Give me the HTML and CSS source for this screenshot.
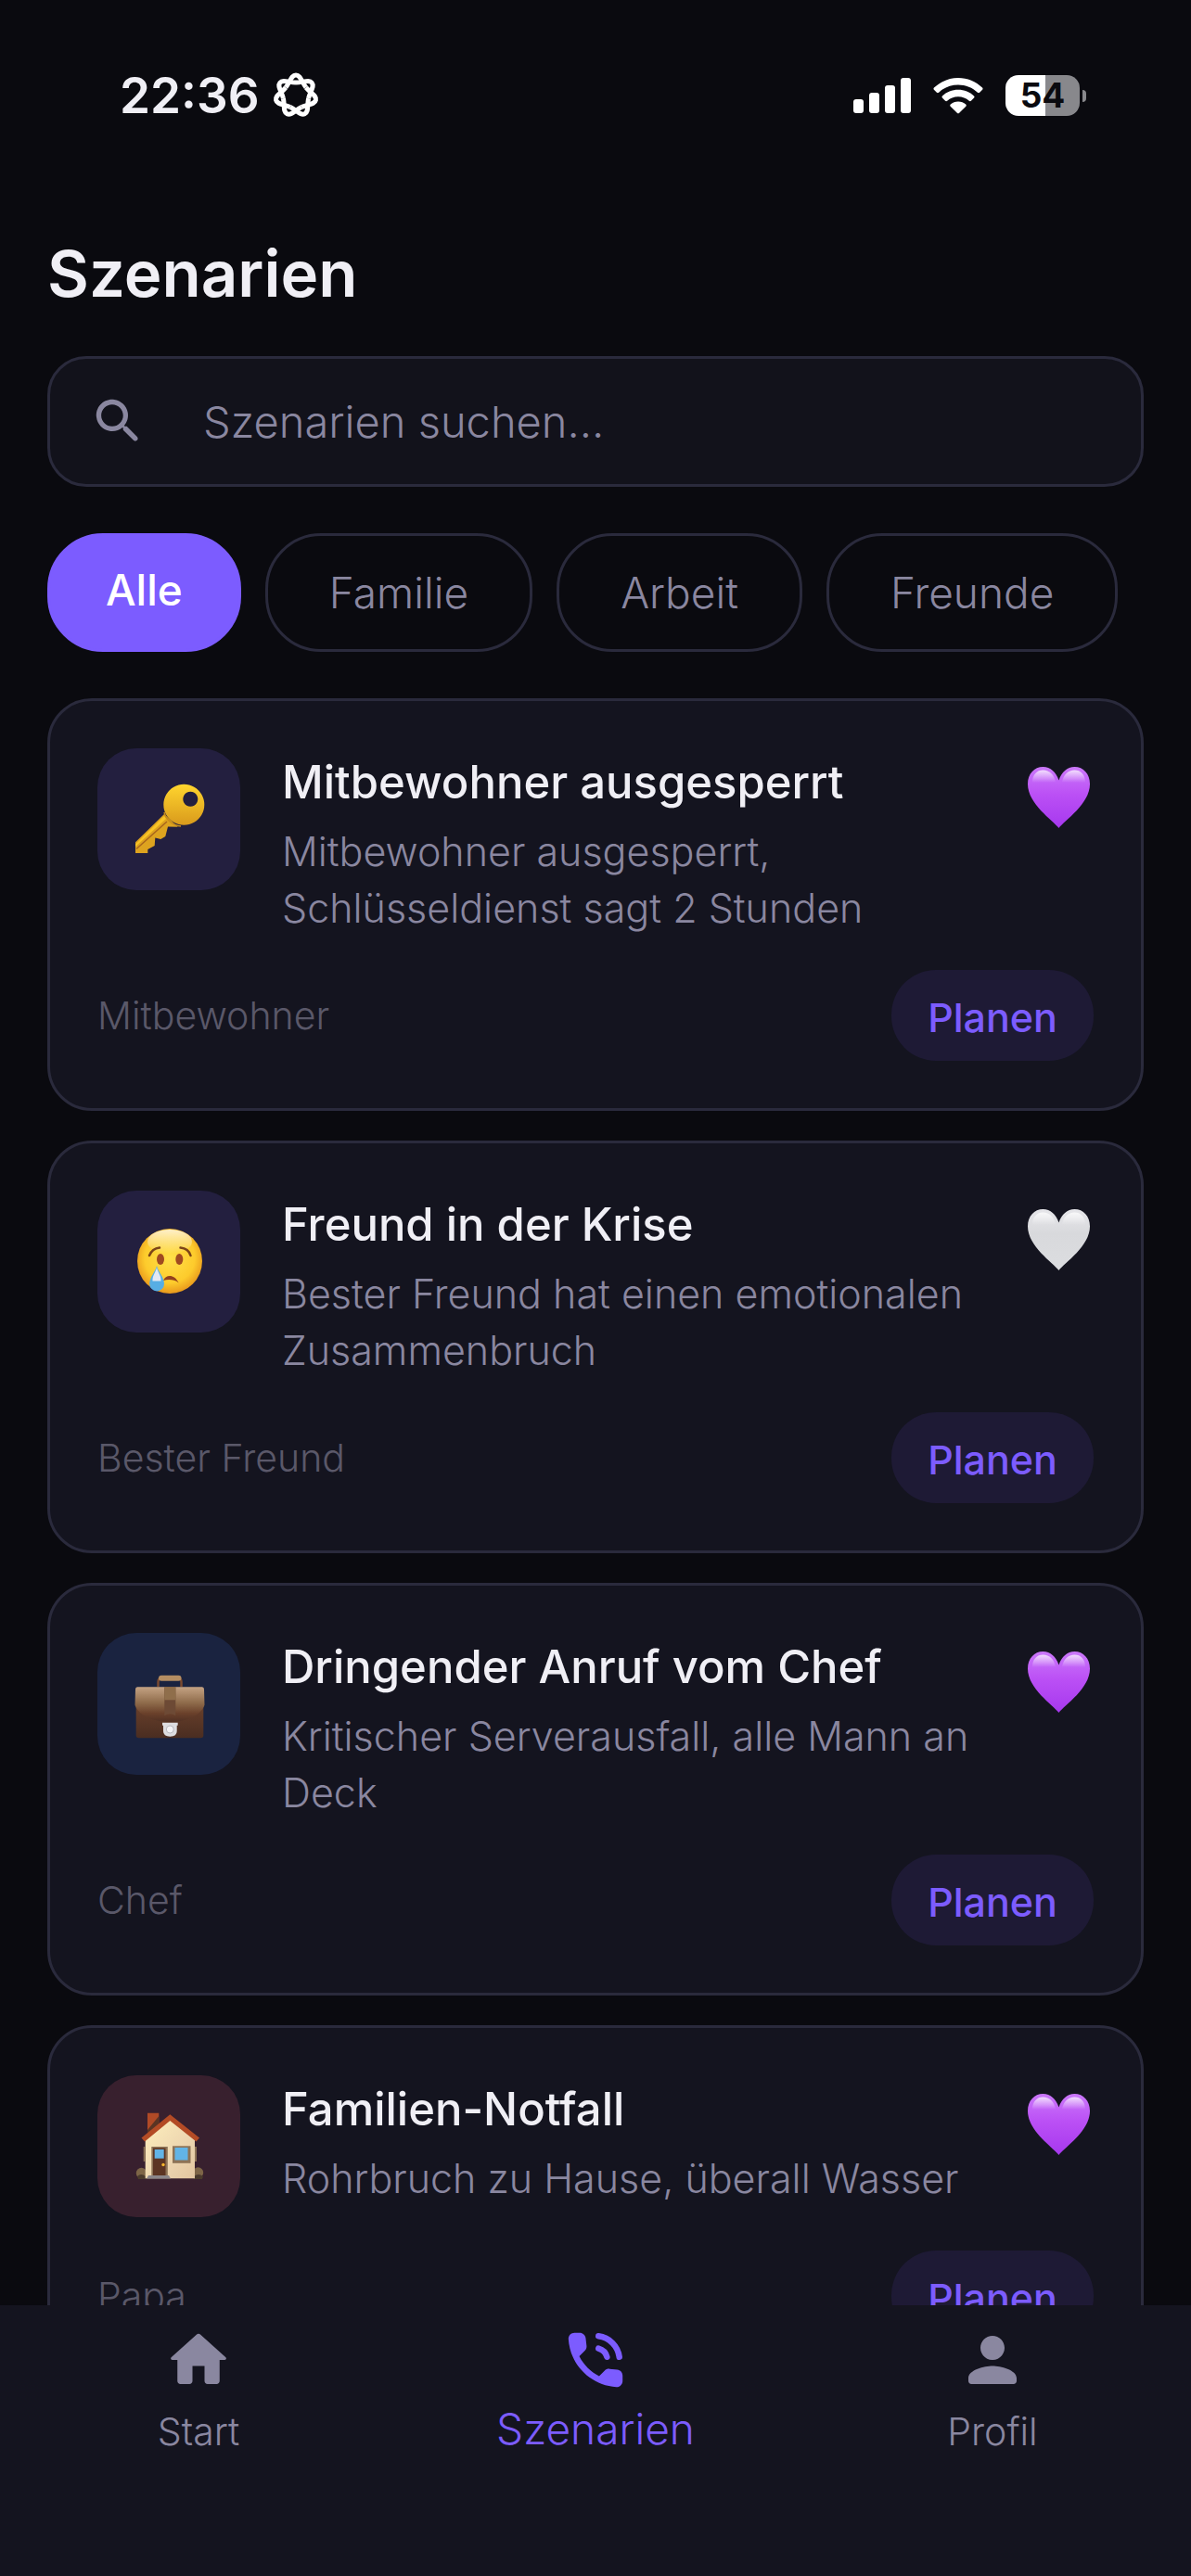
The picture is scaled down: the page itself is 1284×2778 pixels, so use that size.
FILE: index.html
```html
<!DOCTYPE html>
<html lang="de">
<head>
<meta charset="utf-8">
<meta name="viewport" content="width=device-width, initial-scale=1">
<title>Szenarien</title>
<link rel="stylesheet" href="styles.css">
</head>
<body>
<svg class="defs" width="0" height="0" aria-hidden="true">
  <defs>
    <linearGradient id="violet" x1="0" y1="0" x2="0" y2="1">
      <stop offset="0" stop-color="#cb78fa"/><stop offset=".45" stop-color="#bb50f5"/><stop offset="1" stop-color="#a638ee"/>
    </linearGradient>
    <linearGradient id="silver" x1="0" y1="0" x2="0" y2="1">
      <stop offset="0" stop-color="#e6e6ea"/><stop offset=".4" stop-color="#d8d9dc"/><stop offset="1" stop-color="#dcdde0"/>
    </linearGradient>
    <linearGradient id="shine" x1="0" y1="0" x2="0" y2="1">
      <stop offset="0" stop-color="#fff" stop-opacity=".75"/><stop offset="1" stop-color="#fff" stop-opacity="0"/>
    </linearGradient>
    <linearGradient id="gold" x1="0" y1="0" x2="0" y2="1">
      <stop offset="0" stop-color="#ffd52e"/><stop offset="1" stop-color="#d99a1c"/>
    </linearGradient>
    <radialGradient id="face" cx=".5" cy=".45" r=".55">
      <stop offset="0" stop-color="#ffe04a"/><stop offset=".7" stop-color="#fdcb2c"/><stop offset="1" stop-color="#e8981c"/>
    </radialGradient>
    <linearGradient id="flap" x1="0" y1="0" x2="0" y2="1">
      <stop offset="0" stop-color="#c4a283"/><stop offset=".45" stop-color="#8f6c4b"/><stop offset=".75" stop-color="#6b412b"/><stop offset="1" stop-color="#4f3023"/>
    </linearGradient>
    <linearGradient id="leather" x1="0" y1="0" x2="0" y2="1">
      <stop offset="0" stop-color="#7a4a30"/><stop offset="1" stop-color="#4a2d21"/>
    </linearGradient>
    <linearGradient id="wall" x1="0" y1="0" x2="1" y2="1">
      <stop offset="0" stop-color="#fff0bd"/><stop offset=".6" stop-color="#edd6b0"/><stop offset="1" stop-color="#e2c6a0"/>
    </linearGradient>
    <symbol id="heart" viewBox="0 0 67 66">
      <path d="M33.500 66C27 57.500 0 40 0 18.500C0 7.500 7 0 16.500 0c8 0 14 5.500 17 14.500C36.500 5.500 42.500 0 50.500 0C60 0 67 7.500 67 18.500C67 40 40 57.500 33.500 66z"/>
      <path d="M5 17C5 8 10 3.500 16.500 3.500c7 0 12 5 13.500 13zM37 16.500C38.500 8.500 43.500 3.500 50.500 3.500C57 3.500 62 8 62 17z" fill="url(#shine)"/>
    </symbol>
  </defs>
</svg>

<div class="app">
  <div class="status">
    <div class="status-group status-left">
      <span class="clock">22:36</span>
      <svg width="50" height="50" viewBox="-25 -25 50 50" fill="none" stroke="#fff" stroke-width="5" aria-hidden="true">
        <path id="petal" d="M-10.900-8.700C-6-15-5-22 0-22S6-15 10.900-8.700"/>
        <use href="#petal" transform="rotate(51.430)"/><use href="#petal" transform="rotate(102.860)"/>
        <use href="#petal" transform="rotate(154.290)"/><use href="#petal" transform="rotate(205.710)"/>
        <use href="#petal" transform="rotate(257.140)"/><use href="#petal" transform="rotate(308.570)"/>
      </svg>
    </div>
    <div class="status-group status-right">
      <svg width="62" height="40" viewBox="0 0 62 40" fill="#fff" aria-hidden="true">
        <rect x="0" y="24" width="11" height="15" rx="3"/><rect x="17" y="17" width="11" height="22" rx="3"/>
        <rect x="34" y="9" width="11" height="30" rx="3"/><rect x="51" y="1" width="11" height="38" rx="3"/>
      </svg>
      <svg width="54" height="40" viewBox="0 0 54 40" fill="#fff" aria-hidden="true">
        <path d="M27 1C37 1 46 5 53 11.500c.7.700.7 1.500.1 2.200l-3 3.100c-.6.600-1.500.6-2.200 0C42.500 11.500 35 8.500 27 8.500S11.500 11.500 6.100 16.800c-.7.600-1.600.6-2.200 0l-3-3.100c-.6-.7-.6-1.500.1-2.200C8 5 17 1 27 1z"/>
        <path d="M27 13.800c6.600 0 12.500 2.500 17 6.600.7.700.7 1.600.1 2.200l-3.200 3.200c-.6.600-1.400.6-2.100 0-3.200-2.800-7.300-4.500-11.800-4.500s-8.600 1.700-11.800 4.500c-.7.600-1.500.6-2.100 0l-3.200-3.200c-.6-.6-.6-1.500.1-2.200 4.500-4.100 10.400-6.600 17-6.600z"/>
        <path d="M27 26.500c3.200 0 6 1.100 8.200 3 .7.700.7 1.500.1 2.200l-7.100 7.100c-.7.700-1.700.7-2.400 0l-7.100-7.100c-.6-.7-.6-1.500.1-2.200 2.200-1.900 5-3 8.200-3z"/>
      </svg>
      <div class="battery"><span class="battery-level">54</span><i class="battery-nub"></i></div>
    </div>
  </div>

  <main class="content">
    <h1 class="title">Szenarien</h1>

    <label class="search">
      <svg class="search-icon" viewBox="0 0 24 24" fill="#8a87a0" aria-hidden="true"><path d="M15.500 14h-.79l-.28-.27c1.200-1.400 1.820-3.310 1.480-5.340-.47-2.780-2.790-5-5.590-5.340-4.230-.52-7.790 3.040-7.270 7.270.34 2.800 2.560 5.120 5.340 5.590 2.030.34 3.940-.28 5.340-1.480l.27.28v.79l4.250 4.250c.41.410 1.080.41 1.490 0 .41-.41.41-1.080 0-1.490L15.500 14zm-6 0C7.010 14 5 11.990 5 9.500S7.010 5 9.500 5 14 7.010 14 9.500 11.990 14 9.500 14z"/></svg>
      <input class="search-input" type="search" placeholder="Szenarien suchen..." aria-label="Szenarien suchen">
    </label>

    <div class="chips">
      <button class="chip chip-active" type="button">Alle</button>
      <button class="chip" type="button">Familie</button>
      <button class="chip" type="button">Arbeit</button>
      <button class="chip" type="button">Freunde</button>
    </div>

    <section class="list">
      <article class="card">
        <div class="card-top">
          <div class="tile">
            <svg class="emoji" viewBox="0 0 80 80" role="img" aria-label="Schlüssel">
              <path d="M35 34L4 64.300V76h13.300v-4l7.400-4 .6-8.500 6 1.500 5-3 2.700-10.500 10.700.2z" fill="#dda31f"/>
              <path d="M35 36L4 66.500v2.500L37 39z" fill="#f9c426"/><path d="M5 71.500L38 42" stroke="#a8651c" stroke-width="1.500"/>
              <path fill-rule="evenodd" d="M56.300 1.700a22 22 0 1 0 .01 0zM63.300 9.700a8 8 0 1 1-.01 0z" fill="url(#gold)"/>
              <path d="M35 32c2 8 9 14 18 15" fill="none" stroke="#c98d1b" stroke-width="1.500"/>
            </svg>
          </div>
          <div class="card-text">
            <h2 class="card-title">Mitbewohner ausgesperrt</h2>
            <p class="card-desc">Mitbewohner ausgesperrt, Schlüsseldienst sagt 2 Stunden</p>
          </div>
          <button class="fav" type="button" aria-label="Favorit entfernen" aria-pressed="true"><svg class="heart" fill="url(#violet)"><use href="#heart"/></svg></button>
        </div>
        <div class="card-bottom">
          <span class="caller">Mitbewohner</span>
          <button class="plan" type="button">Planen</button>
        </div>
      </article>

      <article class="card">
        <div class="card-top">
          <div class="tile">
            <svg class="emoji" viewBox="0 0 80 80" role="img" aria-label="Weinendes Gesicht">
              <circle cx="41" cy="39" r="35" fill="url(#face)"/>
              <ellipse cx="41" cy="18" rx="24" ry="13" fill="url(#shine)"/>
              <g fill="none" stroke="#7c4418" stroke-width="2.500" stroke-linecap="round">
                <path d="M19 33C21 28 25 25 30 24.500"/><path d="M52.500 24.500C58 25 62 28 63.500 33"/>
              </g>
              <ellipse cx="31" cy="37" rx="4" ry="6" fill="#a04a20"/><ellipse cx="51.300" cy="37" rx="4" ry="6" fill="#a04a20"/>
              <path d="M34 60C37 53 46 53 50.700 62.500C46 58.500 39 58.500 34 60z" fill="#93401d"/>
              <path d="M27 44C28 50 35 56 35 63.500a7.900 7.900 0 0 1-15.800 0C19.200 56 26 50 27 44z" fill="#57aee4"/>
              <path d="M27 46C28 51 32 55 31.500 60.500H22.500C22 55 26 51 27 46z" fill="#e3e8f2"/>
            </svg>
          </div>
          <div class="card-text">
            <h2 class="card-title">Freund in der Krise</h2>
            <p class="card-desc">Bester Freund hat einen emotionalen Zusammenbruch</p>
          </div>
          <button class="fav" type="button" aria-label="Als Favorit merken" aria-pressed="false"><svg class="heart" fill="url(#silver)"><use href="#heart"/></svg></button>
        </div>
        <div class="card-bottom">
          <span class="caller">Bester Freund</span>
          <button class="plan" type="button">Planen</button>
        </div>
      </article>

      <article class="card">
        <div class="card-top">
          <div class="tile tile-work">
            <svg class="emoji" viewBox="0 0 80 80" role="img" aria-label="Aktentasche">
              <path d="M28.500 21v-5c0-3 1.500-4.500 4-4.500h17c2.500 0 4 1.500 4 4.500v5" fill="none" stroke="#7a4a30" stroke-width="2.500"/>
              <rect x="29" y="8.700" width="24.500" height="6" rx="3" fill="#b48d62"/>
              <rect x="4.700" y="22" width="72.600" height="54.300" rx="3" fill="url(#leather)"/>
              <path d="M6 21.300h70q2 0 2 2.500l.5 17C75 52 58 59 41 59S7 52 3.500 40.800l.5-17q0-2.500 2-2.500z" fill="url(#flap)"/>
              <path d="M35.300 21.300h12v31q-6-4-12 0z" fill="#6d4a35"/>
              <rect x="35.300" y="21.300" width="12" height="14" fill="#8f6e4b"/>
              <path d="M33 59.700h16.700v3h-1V69q0 5.700-7.300 5.700T34 69v-6.300h-1z" fill="#dddde0"/>
              <circle cx="41.300" cy="67" r="4" fill="#f3f3f5" stroke="#b9b9bf"/>
            </svg>
          </div>
          <div class="card-text">
            <h2 class="card-title">Dringender Anruf vom Chef</h2>
            <p class="card-desc">Kritischer Serverausfall, alle Mann an Deck</p>
          </div>
          <button class="fav" type="button" aria-label="Favorit entfernen" aria-pressed="true"><svg class="heart" fill="url(#violet)"><use href="#heart"/></svg></button>
        </div>
        <div class="card-bottom">
          <span class="caller">Chef</span>
          <button class="plan" type="button">Planen</button>
        </div>
      </article>

      <article class="card">
        <div class="card-top">
          <div class="tile tile-family">
            <svg class="emoji" viewBox="0 0 80 80" role="img" aria-label="Haus">
              <path d="M17 3.700h12.300V16L17 26z" fill="#b04a26"/><path d="M29.300 7v9L17 26v-4z" fill="#5a3423"/>
              <circle cx="10.500" cy="68.500" r="5.700" fill="#7d6547"/><circle cx="71.500" cy="68" r="5.700" fill="#7d6547"/>
              <path d="M6 72q4-4 9 0v3H7zM67 72q5-4 10 0l-1 3h-9z" fill="#4a3a2c"/>
              <path d="M14.700 74.300V29L41.300 9 68 29v45.300z" fill="url(#wall)"/>
              <path d="M41.300 5.300L73 30.500l-3.500 4L41.300 12 14 34.500l-3.500-4z" fill="#b34b25"/>
              <path d="M12.700 40h2v16h-2zM68 40h2v16h-2z" fill="#8d7356"/>
              <rect x="21.300" y="40" width="17.500" height="31" fill="#8d7356"/><rect x="23" y="41.500" width="13.500" height="29.500" fill="#5c3523"/>
              <rect x="24.700" y="43" width="10" height="9.700" fill="#62b4e6"/><circle cx="34" cy="59.500" r="1.700" fill="#f5b52e"/>
              <rect x="44" y="39.300" width="19.500" height="18.500" fill="#8d7356"/><rect x="46.500" y="41" width="14" height="13.500" fill="#62b4e6"/>
              <path d="M18 71h22l2 3.500H16z" fill="#8b8689"/>
            </svg>
          </div>
          <div class="card-text">
            <h2 class="card-title">Familien-Notfall</h2>
            <p class="card-desc">Rohrbruch zu Hause, überall Wasser</p>
          </div>
          <button class="fav" type="button" aria-label="Favorit entfernen" aria-pressed="true"><svg class="heart" fill="url(#violet)"><use href="#heart"/></svg></button>
        </div>
        <div class="card-bottom">
          <span class="caller">Papa</span>
          <button class="plan" type="button">Planen</button>
        </div>
      </article>
    </section>
  </main>

  <nav class="tabs">
    <a class="tab" href="#start">
      <svg class="tab-icon" viewBox="0 0 24 24" fill="currentColor" aria-hidden="true"><path d="M10 19v-5h4v5c0 .55.45 1 1 1h3c.55 0 1-.45 1-1v-7h1.700c.46 0 .68-.57.33-.87L12.670 3.600c-.38-.34-.96-.34-1.340 0l-8.360 7.530c-.34.3-.13.87.33.87H5v7c0 .55.45 1 1 1h3c.55 0 1-.45 1-1z"/></svg>
      <span class="tab-label">Start</span>
    </a>
    <a class="tab tab-active" href="#szenarien" aria-current="page">
      <svg class="tab-icon" viewBox="0 0 24 24" fill="currentColor" aria-hidden="true">
        <path d="M19.230 15.260l-2.540-.29c-.61-.07-1.210.14-1.640.57l-1.840 1.840c-2.830-1.440-5.150-3.750-6.590-6.590l1.850-1.850c.43-.43.64-1.030.57-1.640l-.29-2.520c-.12-1.010-.97-1.770-1.990-1.770H5.030c-1.130 0-2.070.94-2 2.070.53 8.540 7.360 15.360 15.890 15.890 1.130.07 2.070-.87 2.070-2v-1.730c.01-1.010-.75-1.860-1.760-1.980z"/>
        <path d="M13 4.100A8 8 0 0 1 19.900 11M13 8.200A4 4 0 0 1 15.800 11" fill="none" stroke="currentColor" stroke-width="2" stroke-linecap="round"/>
      </svg>
      <span class="tab-label">Szenarien</span>
    </a>
    <a class="tab" href="#profil">
      <svg class="tab-icon" viewBox="0 0 24 24" fill="currentColor" aria-hidden="true"><path d="M12 12c2.210 0 4-1.790 4-4s-1.790-4-4-4-4 1.790-4 4 1.790 4 4 4zm0 2c-2.670 0-8 1.340-8 4v1c0 .55.45 1 1 1h14c.55 0 1-.45 1-1v-1c0-2.660-5.330-4-8-4z"/></svg>
      <span class="tab-label">Profil</span>
    </a>
  </nav>
</div>
</body>
</html>
```
FILE: styles.css
```css
:root {
  --bg: #0a0a0f;
  --surface: #14141f;
  --field: #12121b;
  --line: #2a2a3c;
  --accent: #7c5cff;
  --text: #f0eff5;
  --muted: #8a87a0;
  --faint: #5a5869;
}

* { box-sizing: border-box; }

body {
  margin: 0;
  background: var(--bg);
  color: var(--text);
  font-family: Inter, "Liberation Sans", sans-serif;
}

button, input { font: inherit; }

button {
  margin: 0;
  padding: 0;
  border: 0;
  background: none;
  color: inherit;
  cursor: pointer;
}

.defs { position: absolute; }

.app {
  display: flex;
  flex-direction: column;
  height: 100vh;
}

/* Status bar */
.status {
  flex: none;
  display: flex;
  justify-content: space-between;
  align-items: center;
  height: 206px;
  padding: 0 113px 0 129px;
}

.status-group { display: flex; align-items: center; }
.status-left { gap: 14px; }
.status-right { gap: 24px; }

.clock {
  font-size: 53px;
  font-weight: 600;
  line-height: 64px;
}

.battery {
  display: flex;
  align-items: center;
  gap: 3px;
}

.battery-level {
  width: 80px;
  border-radius: 14px;
  background: linear-gradient(90deg, #fff 54%, #88888c 54%);
  color: var(--bg);
  font-size: 37px;
  font-weight: 700;
  line-height: 44px;
  text-align: center;
}

.battery-nub {
  width: 4px;
  height: 13px;
  border-radius: 0 4px 4px 0;
  background: #88888c;
}

/* Scrolling content */
.content {
  flex: 1;
  min-height: 0;
  overflow-y: auto;
  scrollbar-width: none;
  padding: 46px 51px 0;
}

.title {
  margin: 0 0 46px;
  font-size: 69px;
  font-weight: 600;
  line-height: 86px;
}

.search {
  display: flex;
  align-items: center;
  height: 141px;
  padding: 0 42px;
  gap: 60px;
  border: 3px solid var(--line);
  border-radius: 42px;
  background: var(--field);
}

.search-icon { flex: none; width: 63px; height: 63px; }

.search-input {
  flex: 1;
  min-width: 0;
  padding: 0;
  border: 0;
  outline: 0;
  background: none;
  color: var(--text);
  font-size: 47px;
  font-weight: 300;
}

.search-input::placeholder { color: var(--muted); opacity: 1; }

.chips {
  display: flex;
  gap: 26px;
  margin: 50px 0;
}

.chip {
  flex: none;
  height: 128px;
  padding: 0 66px;
  border: 3px solid var(--line);
  border-radius: 60px;
  color: var(--muted);
  font-size: 46px;
  font-weight: 300;
}

.chip-active {
  padding: 0 60px 6px;
  border-color: var(--accent);
  background: var(--accent);
  color: #fff;
  font-weight: 500;
}

.list {
  display: flex;
  flex-direction: column;
  gap: 32px;
}

.card {
  display: flex;
  flex-direction: column;
  gap: 36px;
  padding: 51px;
  border: 3px solid var(--line);
  border-radius: 48px;
  background: var(--surface);
}

.card-top {
  display: flex;
  align-items: flex-start;
}

.tile {
  flex: none;
  display: grid;
  place-items: center;
  width: 154px;
  height: 153px;
  margin-right: 45px;
  border-radius: 42px;
  background: #231f3f;
}

.tile-work { background: #1a2340; }
.tile-family { background: #38202e; }

.emoji { width: 80px; height: 80px; }

.card-text { flex: 1; min-width: 0; }

.card-title {
  margin: 0 0 8px;
  font-size: 49px;
  font-weight: 500;
  line-height: 73px;
}

.card-desc {
  margin: 0;
  color: var(--muted);
  font-size: 43px;
  font-weight: 300;
  line-height: 61px;
}

.fav {
  flex: none;
  margin-left: 36px;
  padding: 20px 4px;
  line-height: 0;
}

.heart { width: 67px; height: 66px; }

.card-bottom {
  display: flex;
  justify-content: space-between;
  align-items: center;
}

.caller {
  color: var(--faint);
  font-size: 41px;
  font-weight: 300;
}

.plan {
  height: 98px;
  padding: 4px 39px 0;
  border-radius: 48px;
  background: #1e1a35;
  color: var(--accent);
  font-size: 43px;
  font-weight: 500;
}

/* Tab bar */
.tabs {
  flex: none;
  display: grid;
  grid-template-columns: repeat(3, 1fr);
  padding: 20px 0 126px;
  background: var(--surface);
}

.tab {
  display: flex;
  flex-direction: column;
  align-items: center;
  gap: 8px;
  height: 146px;
  color: var(--muted);
  text-decoration: none;
}

.tab-icon { width: 78px; height: 78px; }

.tab-label {
  font-size: 41px;
  font-weight: 300;
  line-height: 60px;
}

.tab-active { color: var(--accent); }

.tab-active .tab-label {
  font-size: 46px;
  line-height: 54px;
}
```
